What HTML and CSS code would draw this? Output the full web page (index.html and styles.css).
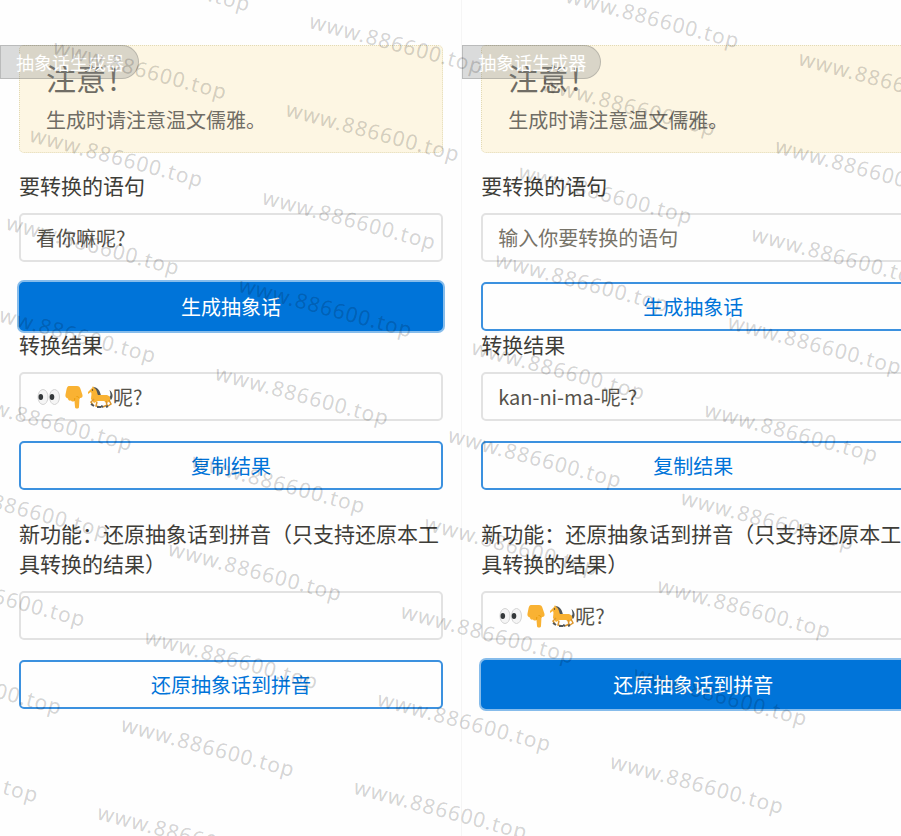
FILE: index.html
```html
<!DOCTYPE html>
<html lang="zh-CN">
<head>
  <meta charset="UTF-8">
  <meta name="viewport" content="width=device-width, initial-scale=1.0">
  <title>抽象话生成器</title>
  <link rel="stylesheet" href="styles.css">
</head>
<body>
<svg class="sprite" aria-hidden="true">
  <symbol id="emojis" viewBox="0 0 76 24">
    <!-- eyes -->
    <ellipse cx="6" cy="12" rx="5" ry="7.500" fill="#f5f5f5" stroke="#d4d4d4"/>
    <ellipse cx="17.500" cy="12" rx="5" ry="7.500" fill="#f5f5f5" stroke="#d4d4d4"/>
    <ellipse cx="3.800" cy="12" rx="2.300" ry="3" fill="#34383a"/>
    <ellipse cx="15" cy="12" rx="2.300" ry="3" fill="#34383a"/>
    <!-- hand pointing down -->
    <path d="M32 1h8c2 0 3 1 3.500 3l2 6c.5 2-1 3.500-3 3L42 22c0 2-4 2-4 0l-.5-6c-1.500 1-3 .5-3.500-.5-2 .5-3-.5-3-2-2-.5-3-2-2.500-4l1-5c.5-2 1-3.500 2.500-3.500z" fill="#f9b233"/>
    <path d="M37.500 15.500l.3-2.500M42.500 13.500c-1-1.500-1.500-2-3-2" fill="none" stroke="#e59600" stroke-width=".8"/>
    <!-- galloping horse -->
    <path d="M56 2c4 0 7 3 8 9l-4 2z" fill="#50565a"/>
    <path d="M71 12c3 0 3-2 1.500-7 3.500 3 4 7 1.500 10z" fill="#50565a"/>
    <path d="M51 7l4-4 1-2 1 2c3 1 3 5 4 7h9c3 1 4 3 3 6l-3 2-3-2h-6l-4 2-3-4c0-3 1-5 0-7l-3 2z" fill="#f9b233"/>
    <path d="M57 14l-3 3 2 3M60 17l-1 4 4 1M69 16l1 4-4 2M72 15l2 4-3 2" fill="none" stroke="#dc962c" stroke-width="1.500"/>
    <path d="M54 19l3 2M60 22h4M66 22l-2-1M71 21l-2 1" stroke="#50565a" stroke-width="2"/>
    <circle cx="55.500" cy="5" r=".7" fill="#333"/>
  </symbol>
</svg>

<main class="screens">
  <section class="screen">
    <div class="title">抽象话生成器</div>
    <div class="alert">
      <h2>注意！</h2>
      <p>生成时请注意温文儒雅。</p>
    </div>
    <form>
      <label for="source-1">要转换的语句</label>
      <input type="text" id="source-1" value="看你嘛呢?" placeholder="输入你要转换的语句">
      <button type="button" class="active">生成抽象话</button>
      <label for="result-1">转换结果</label>
      <div class="field">
        <input type="text" id="result-1" class="with-emoji" value="呢?">
        <svg class="emoji" role="img" aria-label="👀👇🐎"><use href="#emojis"/></svg>
      </div>
      <button type="button">复制结果</button>
      <label for="restore-1" class="feature">新功能：还原抽象话到拼音（只支持还原本工具转换的结果）</label>
      <input type="text" id="restore-1">
      <button type="button">还原抽象话到拼音</button>
    </form>
  </section>

  <section class="screen">
    <div class="title">抽象话生成器</div>
    <div class="alert">
      <h2>注意！</h2>
      <p>生成时请注意温文儒雅。</p>
    </div>
    <form>
      <label for="source-2">要转换的语句</label>
      <input type="text" id="source-2" placeholder="输入你要转换的语句">
      <button type="button">生成抽象话</button>
      <label for="result-2">转换结果</label>
      <input type="text" id="result-2" value="kan-ni-ma-呢-?">
      <button type="button">复制结果</button>
      <label for="restore-2" class="feature">新功能：还原抽象话到拼音（只支持还原本工具转换的结果）</label>
      <div class="field">
        <input type="text" id="restore-2" class="with-emoji" value="呢?">
        <svg class="emoji" role="img" aria-label="👀👇🐎"><use href="#emojis"/></svg>
      </div>
      <button type="button" class="active">还原抽象话到拼音</button>
    </form>
  </section>
</main>

<div class="watermark" aria-hidden="true"><div class="marks" id="marks"></div></div>

<script>
    const marks = document.getElementById('marks');
    for (let i = 0; i < 75; i++) {
        const mark = document.createElement('span');
        mark.textContent = 'www.886600.top';
        marks.appendChild(mark);
    }
</script>
</body>
</html>
```
FILE: styles.css
```css
* { box-sizing: border-box; }
body {
    margin: 0;
    min-height: 100vh;
    overflow: hidden;
    position: relative;
    background: #fefefe;
    color: #3e3d38;
    font-family: "Noto Sans CJK SC", sans-serif;
    font-size: 20px;
    line-height: 30px;
}
.sprite { display: none; }

/* two phone screens, the second one runs off the right edge */
.screens {
    display: grid;
    grid-template-columns: 51.3% 51.3%;
    min-height: 100vh;
}
.screen { position: relative; padding: 45px 19px 20px; }
.screen + .screen { box-shadow: -1px 0 #f5f5f5; }

.title {
    position: absolute;
    left: 0;
    top: 45px;
    padding: 1px 14px 1px 15px;
    border: 1px solid rgba(90, 90, 90, 0.25);
    border-radius: 0 17px 17px 0;
    background: rgba(125, 130, 130, 0.28);
    color: #fff;
    font-size: 18px;
}

.alert {
    padding: 12px 26px 17px;
    border: 1px dotted #e2dab5;
    border-radius: 5px;
    background: #fdf6e3;
    color: #706d65;
}
.alert h2 { margin: 0 0 9px; font-size: 30px; font-weight: 400; line-height: 38px; }
.alert p { margin: 0; }

label { display: block; margin-bottom: 13px; font-size: 21px; }
.alert + form { padding-top: 17px; }
.feature { margin-top: 28px; }
button + label:not(.feature) { margin-top: -2px; }

input, button {
    display: block;
    width: 100%;
    height: 49px;
    border-radius: 5px;
    font: inherit;
}
input {
    padding: 0 15px;
    border: 2px solid #e2e2e2;
    background: transparent;
    color: #55524a;
}
input::placeholder { color: #777368; opacity: 1; }
button {
    margin-top: 20px;
    border: 2px solid #3c91df;
    background: transparent;
    color: #0074d9;
    cursor: pointer;
}
.active {
    border-color: #0074d9;
    background: #0074d9;
    box-shadow: 0 0 0 2px #86bceb;
    color: #fff;
}

.field { position: relative; }
.with-emoji { padding-left: 92px; }
.emoji { position: absolute; left: 18px; top: 13px; width: 76px; height: 24px; }

.watermark {
    position: absolute;
    inset: 0;
    overflow: hidden;
    pointer-events: none;
}
.marks {
    position: absolute;
    left: -128px;
    top: -207px;
    display: grid;
    grid-template-columns: repeat(5, 241px);
    grid-auto-rows: 91px;
    transform: rotate(15deg);
    transform-origin: 0 0;
    color: rgba(0, 0, 0, 0.18);
    font-family: "Noto Sans", sans-serif;
    font-size: 21px;
    letter-spacing: 1px;
}
```
